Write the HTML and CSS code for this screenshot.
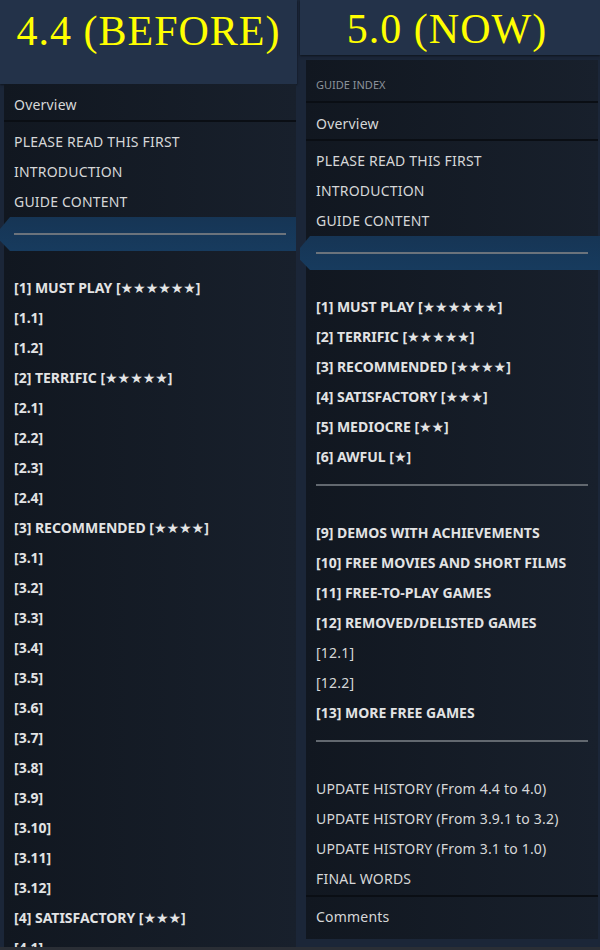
FILE: index.html
```html
<!doctype html>
<html lang="en">
    <head>
        <meta charset="UTF-8" />
        <meta name="viewport" content="width=device-width, initial-scale=1.0" />
        <title>Guide Index - Before / Now</title>
        <link rel="stylesheet" href="styles.css">
    </head>
    <body>
        <div class="page">
            <!-- Old version of the guide index -->
            <section class="column column-before">
                <header class="version-title">4.4 (BEFORE)</header>
                <nav class="guide-index">
                    <div class="index-overview">Overview</div>
                    <div class="index-sections">
                        <div class="index-item">PLEASE READ THIS FIRST</div>
                        <div class="index-item">INTRODUCTION</div>
                        <div class="index-item">GUIDE CONTENT</div>
                        <div class="index-current"><div class="current-line"></div></div>
                        <div class="index-item bold">[1] MUST PLAY [★★★★★★]</div>
                        <div class="index-item bold">[1.1]</div>
                        <div class="index-item bold">[1.2]</div>
                        <div class="index-item bold">[2] TERRIFIC [★★★★★]</div>
                        <div class="index-item bold">[2.1]</div>
                        <div class="index-item bold">[2.2]</div>
                        <div class="index-item bold">[2.3]</div>
                        <div class="index-item bold">[2.4]</div>
                        <div class="index-item bold">[3] RECOMMENDED [★★★★]</div>
                        <div class="index-item bold">[3.1]</div>
                        <div class="index-item bold">[3.2]</div>
                        <div class="index-item bold">[3.3]</div>
                        <div class="index-item bold">[3.4]</div>
                        <div class="index-item bold">[3.5]</div>
                        <div class="index-item bold">[3.6]</div>
                        <div class="index-item bold">[3.7]</div>
                        <div class="index-item bold">[3.8]</div>
                        <div class="index-item bold">[3.9]</div>
                        <div class="index-item bold">[3.10]</div>
                        <div class="index-item bold">[3.11]</div>
                        <div class="index-item bold">[3.12]</div>
                        <div class="index-item bold">[4] SATISFACTORY [★★★]</div>
                        <div class="index-item bold">[4.1]</div>
                    </div>
                </nav>
            </section>

            <!-- New version of the guide index -->
            <section class="column column-now">
                <header class="version-title">5.0 (NOW)</header>
                <nav class="guide-index">
                    <div class="index-heading">Guide Index</div>
                    <div class="index-overview">Overview</div>
                    <div class="index-sections">
                        <div class="index-item">PLEASE READ THIS FIRST</div>
                        <div class="index-item">INTRODUCTION</div>
                        <div class="index-item">GUIDE CONTENT</div>
                        <div class="index-current"><div class="current-line"></div></div>
                        <div class="index-item bold">[1] MUST PLAY [★★★★★★]</div>
                        <div class="index-item bold">[2] TERRIFIC [★★★★★]</div>
                        <div class="index-item bold">[3] RECOMMENDED [★★★★]</div>
                        <div class="index-item bold">[4] SATISFACTORY [★★★]</div>
                        <div class="index-item bold">[5] MEDIOCRE [★★]</div>
                        <div class="index-item bold">[6] AWFUL [★]</div>
                        <div class="index-rule"></div>
                        <div class="index-item bold">[9] DEMOS WITH ACHIEVEMENTS</div>
                        <div class="index-item bold">[10] FREE MOVIES AND SHORT FILMS</div>
                        <div class="index-item bold">[11] FREE-TO-PLAY GAMES</div>
                        <div class="index-item bold">[12] REMOVED/DELISTED GAMES</div>
                        <div class="index-item">[12.1]</div>
                        <div class="index-item">[12.2]</div>
                        <div class="index-item bold">[13] MORE FREE GAMES</div>
                        <div class="index-rule"></div>
                        <div class="index-item">UPDATE HISTORY (From 4.4 to 4.0)</div>
                        <div class="index-item">UPDATE HISTORY (From 3.9.1 to 3.2)</div>
                        <div class="index-item">UPDATE HISTORY (From 3.1 to 1.0)</div>
                        <div class="index-item">FINAL WORDS</div>
                    </div>
                    <div class="index-comments">Comments</div>
                </nav>
            </section>
        </div>
    </body>
</html>
```

FILE: styles.css
```css
/* Page */
html {
    background-color: #2a2e35;
}
body {
    margin: 0;
    font-family: "Noto Sans", "DejaVu Sans", sans-serif;
    font-size: 14px;
    color: #d6d7d8;
}
.page {
    display: flex;
    gap: 3px;
    height: 947px;
    overflow: hidden;
    background-color: #1b2638;
}
.column {
    display: flex;
    flex-direction: column;
    min-width: 0;
}
.column-before {
    width: 297px;
}
.column-now {
    flex: 1;
}

/* Yellow version titles */
.version-title {
    flex-shrink: 0;
    box-sizing: border-box;
    background-color: #233249;
    box-shadow: 0 1px 2px rgba(0, 0, 0, 0.5);
    color: #ffff00;
    font-family: "Liberation Serif", "Times New Roman", serif;
    font-size: 42px;
    line-height: 46px;
    letter-spacing: 1px;
    text-align: center;
    white-space: nowrap;
}
.column-before .version-title {
    height: 84px;
    padding-top: 8px;
}
.column-now .version-title {
    height: 55px;
    padding-top: 6px;
    padding-right: 6px;
}

/* Guide index panel */
.guide-index {
    background: linear-gradient(to right, #111720, #18202c);
}
.column-before .guide-index {
    flex: 1;
    min-height: 0;
    margin: 0 1px 0 4px;
}
.column-now .guide-index {
    margin: 5px 2px 0 6px;
}
.index-heading {
    padding: 17px 10px 8px;
    line-height: 16px;
    font-size: 11px;
    color: #8b929a;
    text-transform: uppercase;
    border-bottom: 2px solid #0a0e14;
}
.index-overview {
    padding: 11px 10px 5px;
    line-height: 20px;
    letter-spacing: 0.2px;
    border-bottom: 2px solid #0a0e14;
}
.index-sections {
    padding: 5px 0 1px;
}
.index-item {
    padding: 0 10px;
    line-height: 30px;
    letter-spacing: 0.2px;
    white-space: nowrap;
}
.index-item.bold {
    font-weight: bold;
    letter-spacing: 0;
    color: #e2e3e4;
}
.index-current {
    height: 34px;
    margin-bottom: 22px;
    padding: 16px 10px 0;
    box-sizing: border-box;
    background: linear-gradient(to bottom, #163555, #173b5e);
    clip-path: polygon(10px 0, 100% 0, 100% 100%, 10px 100%, 0 70%, 0 35%);
}
.column-before .index-current {
    margin-left: -4px;
    padding-left: 14px;
    margin-right: 0;
}
.column-now .index-current {
    margin-left: -6px;
    margin-right: -2px;
    padding-left: 16px;
    padding-right: 12px;
}
.current-line {
    height: 2px;
    background-color: #6b737c;
}
.index-rule {
    height: 2px;
    margin: 12px 10px 32px;
    background-color: #62686f;
}
.index-comments {
    padding: 10px 10px 12px;
    line-height: 20px;
    letter-spacing: 0.2px;
    border-top: 2px solid #0a0e14;
}
```
